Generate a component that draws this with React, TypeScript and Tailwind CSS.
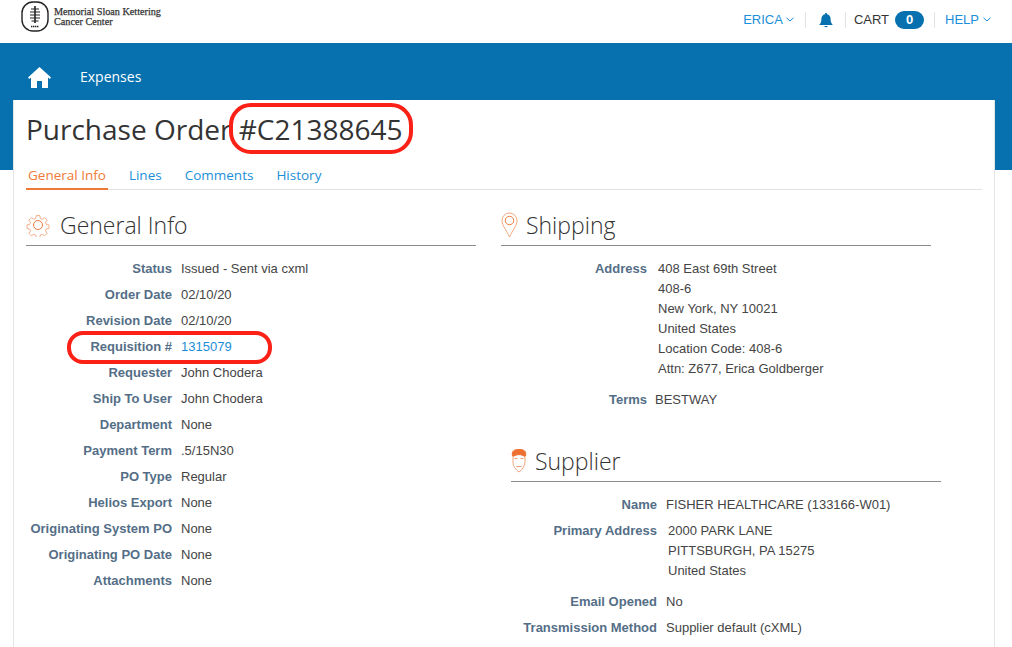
import React from "react";

const leftRows: [string, string][] = [
  ["Status", "Issued - Sent via cxml"],
  ["Order Date", "02/10/20"],
  ["Revision Date", "02/10/20"],
  ["Requisition #", "1315079"],
  ["Requester", "John Chodera"],
  ["Ship To User", "John Chodera"],
  ["Department", "None"],
  ["Payment Term", ".5/15N30"],
  ["PO Type", "Regular"],
  ["Helios Export", "None"],
  ["Originating System PO", "None"],
  ["Originating PO Date", "None"],
  ["Attachments", "None"],
];

const Logo = () => (
  <svg width="28" height="31" viewBox="0 0 28 31" fill="none" stroke="#222">
    <rect x="1" y="1" width="26" height="29" rx="11" strokeWidth="1.4" />
    <path d="M14 5v17" strokeWidth="1.6" />
    <path d="M10 8h8M9 11h10M9 14h10M9 17h10M10.5 20h7" strokeWidth="1.1" />
    <path d="M10 25.5h8" strokeWidth="1.6" strokeDasharray="1.4 .6" />
  </svg>
);

const Chevron = ({ className }: { className: string }) => (
  <svg width="8" height="5" viewBox="0 0 8 5" fill="none" stroke="#1a8fd8" strokeWidth="1" className={className}>
    <path d="M.5.8 4 4 7.5.8" />
  </svg>
);

const Gear = () => (
  <svg width="24" height="24" viewBox="0 0 24 24" fill="none" stroke="#f4a67d" strokeWidth="1" className="shrink-0">
    <circle cx="12" cy="12" r="4.5" stroke="#ee7d3f" />
    <path d="M10 1.5h4l.6 3.2 2 .9 2.7-1.8 2.8 2.8-1.8 2.7.9 2 3 .6v4l-3 .6-.9 2 1.8 2.7-2.8 2.8-2.7-1.8-2 .9-.6 3h-4l-.6-3-2-.9-2.7 1.8-2.8-2.8 1.8-2.7-.9-2-3-.6v-4l3-.6.9-2-1.8-2.7 2.8-2.8 2.7 1.8 2-.9z" transform="translate(1.2 1.2) scale(.9)" />
  </svg>
);

const Pin = () => (
  <svg width="17" height="26" viewBox="0 0 17 26" fill="none" stroke="#f4a67d" strokeWidth="1" className="shrink-0">
    <path d="M8.5 25 C5.5 18 1 14 1 8.5 a7.5 7.5 0 0 1 15 0 C16 14 11.5 18 8.5 25z" />
    <circle cx="8.5" cy="8.5" r="4.2" stroke="#ee7d3f" />
  </svg>
);

const Face = () => (
  <svg width="16" height="24" viewBox="0 0 16 24" fill="none" stroke="#f4a67d" strokeWidth="1" className="shrink-0">
    <path d="M1.5 7 C.5 2 3 .5 8 .5 s7.5 1.5 6.5 6.5 l-1 .5 C11 5 5 5 2.5 7.5z" fill="#ee7030" stroke="#ee7030" />
    <path d="M2 8v5c0 4 3 8 6 10 3-2 6-6 6-10V8" />
    <path d="M3.5 9.5h3M9.5 9.5h3M5.5 17.5h5" stroke="#ee9a6c" />
  </svg>
);

const SectionHead = ({ icon, title, className }: { icon: React.ReactNode; title: string; className: string }) => (
  <div className={`flex items-center border-b border-[#8c8c8c] ${className}`}>
    {icon}
    <h2 className="font-['Open_Sans',sans-serif] font-light text-[23px] leading-[32px] text-[#333]">{title}</h2>
  </div>
);

const blue = "text-[#1a8fd8]";

export default function App() {
  return (
    <div className="w-[1012px] h-[647px] overflow-hidden bg-white font-['Liberation_Sans',sans-serif] text-[13px] text-[#444]">
      <header className="h-[43px] flex items-start justify-between bg-white">
        <div className="flex items-start pl-[21px] pt-[1px]">
          <Logo />
          <div className="ml-[5px] pt-[6px] font-['Liberation_Serif',serif] text-[10.2px] leading-[10px] text-[#333] [-webkit-text-stroke:0.25px_#333]">
            <div>Memorial Sloan Kettering</div>
            <div>Cancer Center</div>
          </div>
        </div>
        <div className="flex items-center h-[18px] mt-[11px] pr-[21px] text-[13px]">
          <span className={blue}>ERICA</span>
          <Chevron className="ml-[3px] mb-[2px]" />
          <span className="ml-[11px] h-[16px] w-px bg-[#e2e2e2]" />
          <svg width="14" height="15" viewBox="0 0 14 15" className="ml-[13px]" fill="#0771af">
            <path d="M7 0a1 1 0 0 1 1 1.2c2.4.5 3.6 2.4 3.6 4.8 0 3 .8 4.4 2.2 6H.2c1.4-1.6 2.2-3 2.2-6 0-2.4 1.2-4.3 3.6-4.8A1 1 0 0 1 7 0zM5.2 13h3.6a1.9 1.9 0 0 1-3.6 0z" />
          </svg>
          <span className="ml-[12px] h-[16px] w-px bg-[#e2e2e2]" />
          <span className="ml-[8px] text-[#333]">CART</span>
          <span className="ml-[6px] w-[29px] h-[18px] rounded-[9px] bg-[#0771af] text-white text-[13px] font-bold flex items-center justify-center">0</span>
          <span className="ml-[10px] h-[16px] w-px bg-[#e2e2e2]" />
          <span className={`ml-[10px] ${blue}`}>HELP</span>
          <Chevron className="ml-[4px] mb-[2px]" />
        </div>
      </header>

      <div className="h-[127px] bg-[#0771af]">
        <div className="flex items-center pl-[28px] pt-[22px]">
          <svg width="23" height="21" viewBox="0 0 23 21" fill="#fff">
            <path d="M11.5 0 23 10.6l-1.2 1.4-1.8-1.5V21h-6v-7h-5v7H3V10.5L1.2 12 0 10.6z" />
          </svg>
          <span className="ml-[29px] font-['Open_Sans',sans-serif] text-[14px] leading-[24px] text-white">Expenses</span>
        </div>
      </div>

      <main className="relative -mt-[70px] ml-[13px] w-[982px] h-[560px] bg-white border-x border-[#e4e4e4] pl-[12px] pr-[12px]">
        <h1 className="pt-[10px] font-['Open_Sans',sans-serif] text-[28px] leading-[38px] text-[#333]">Purchase Order #C21388645</h1>

        <nav className="mt-[15px] h-[27px] flex border-b border-[#e2e2e2] font-['Open_Sans',sans-serif] text-[13.5px] leading-[24px] text-[#1a8fd8]">
          <span className="h-[27px] px-[2px] border-b-2 border-[#ef7a35] text-[#ef7a35]">General Info</span>
          <span className="ml-[21px]">Lines</span>
          <span className="ml-[23px]">Comments</span>
          <span className="ml-[23px]">History</span>
        </nav>

        <div className="flex mt-[20px] items-start">
          <section className="w-[450px] shrink-0">
            <SectionHead icon={<Gear />} title="General Info" className="h-[36px] pb-[5px] gap-[10px]" />
            <div className="mt-[10px]">
              {leftRows.map(([k, v]) => (
                <div key={k} className="flex h-[26px] items-center">
                  <span className="w-[146px] text-right font-bold text-[#546e87] whitespace-nowrap">{k}</span>
                  <span className={`ml-[9px] ${k === "Requisition #" ? "text-[#1a8fd8]" : ""}`}>{v}</span>
                </div>
              ))}
            </div>
          </section>

          <div className="ml-[25px] w-[440px] shrink-0">
            <section className="w-[430px]">
              <SectionHead icon={<Pin />} title="Shipping" className="h-[36px] pb-[5px] gap-[8px]" />
              <div className="flex mt-[13px]">
                <span className="w-[146px] text-right font-bold text-[#546e87] leading-[20px]">Address</span>
                <div className="ml-[11px] leading-[20px]">
                  <div>408 East 69th Street</div>
                  <div>408-6</div>
                  <div>New York, NY 10021</div>
                  <div>United States</div>
                  <div>Location Code: 408-6</div>
                  <div>Attn: Z677, Erica Goldberger</div>
                </div>
              </div>
              <div className="flex mt-[11px] leading-[20px]">
                <span className="w-[146px] text-right font-bold text-[#546e87]">Terms</span>
                <span className="ml-[8px]">BESTWAY</span>
              </div>
            </section>

            <section className="ml-[10px] mt-[35px] w-[430px]">
              <SectionHead icon={<Face />} title="Supplier" className="h-[37px] pb-[5px] gap-[8px]" />
              <div className="flex mt-[13px] leading-[20px]">
                <span className="w-[146px] text-right font-bold text-[#546e87]">Name</span>
                <span className="ml-[9px]">FISHER HEALTHCARE (133166-W01)</span>
              </div>
              <div className="flex mt-[6px] leading-[20px]">
                <span className="w-[146px] text-right font-bold text-[#546e87]">Primary Address</span>
                <div className="ml-[11px]">
                  <div>2000 PARK LANE</div>
                  <div>PITTSBURGH, PA 15275</div>
                  <div>United States</div>
                </div>
              </div>
              <div className="flex mt-[11px] leading-[20px]">
                <span className="w-[146px] text-right font-bold text-[#546e87]">Email Opened</span>
                <span className="ml-[9px]">No</span>
              </div>
              <div className="flex mt-[6px] leading-[20px]">
                <span className="w-[146px] text-right font-bold text-[#546e87] whitespace-nowrap">Transmission Method</span>
                <span className="ml-[9px]">Supplier default (cXML)</span>
              </div>
            </section>
          </div>
        </div>

        <div className="absolute left-[215px] top-[3px] w-[184px] h-[51px] rounded-[22px] border-[4px] border-[#fb2116]" />
        <div className="absolute left-[53px] top-[231px] w-[205px] h-[33px] rounded-[16px] border-[4px] border-[#fb2116]" />
      </main>
    </div>
  );
}
